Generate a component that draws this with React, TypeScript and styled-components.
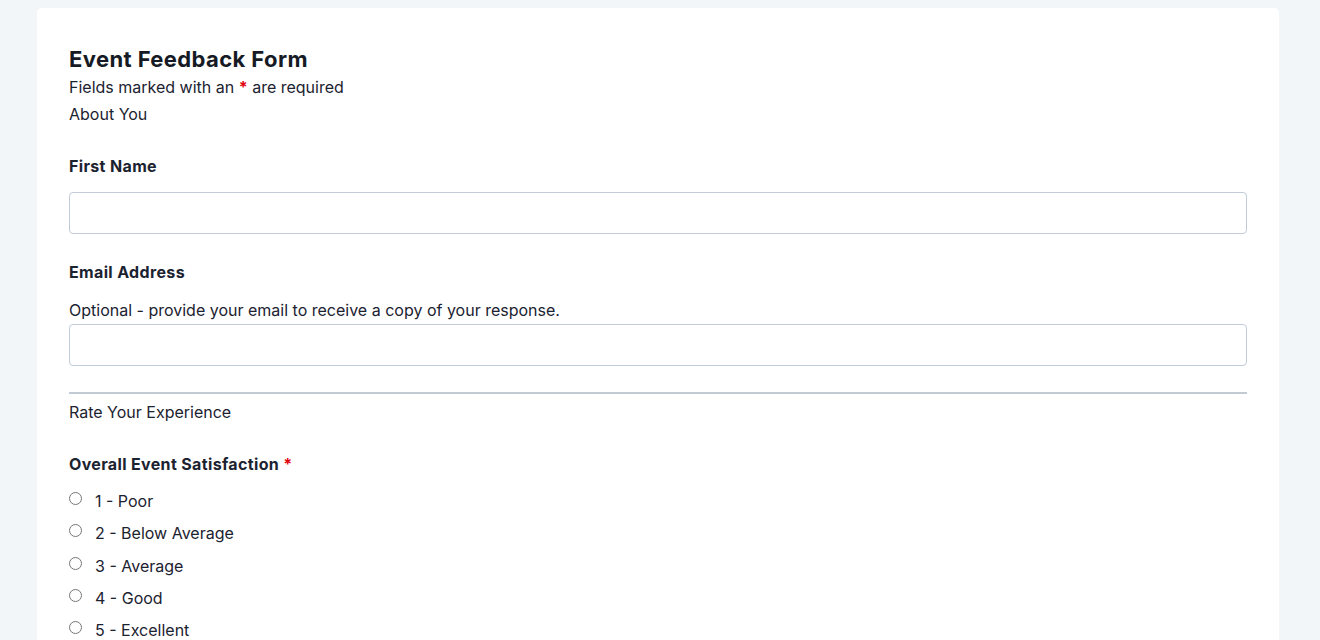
import React from "react";
import styled, { createGlobalStyle } from "styled-components";

const GlobalStyle = createGlobalStyle`
  html, body {
    margin: 0;
    padding: 0;
    background: #f3f6f9;
    font-family: Inter, "Noto Sans", sans-serif;
    color: #1b2230;
  }
`;

const Page = styled.div`
  padding: 8px 41px 0 37px;
`;

const Card = styled.form`
  background: #ffffff;
  border-radius: 5px;
  padding: 37px 32px 40px;
  box-sizing: border-box;
`;

const Title = styled.h1`
  margin: 0 0 1px;
  font-size: 22px;
  line-height: 28px;
  font-weight: 700;
  letter-spacing: 0.4px;
  color: #151a24;
`;

const Text = styled.p`
  margin: 0;
  font-size: 16px;
  line-height: 27px;
`;

const Req = styled.span`
  color: #e0000b;
  font-weight: 700;
`;

const Field = styled.div`
  margin-top: 26px;
  display: flex;
  flex-direction: column;
`;

const Label = styled.label`
  font-size: 16px;
  line-height: 24px;
  font-weight: 700;
  letter-spacing: 0.35px;
  color: #1b2230;
`;

const Hint = styled.div`
  margin-top: 14px;
  font-size: 16px;
  line-height: 24px;
`;

const Input = styled.input<{ $gap: number }>`
  margin-top: ${(p) => p.$gap}px;
  height: 42px;
  box-sizing: border-box;
  border: 1px solid #c2ccd8;
  border-radius: 4px;
  padding: 0 12px;
  font: inherit;
  font-size: 16px;
`;

const Divider = styled.hr`
  margin: 26px 0 5px;
  border: none;
  height: 2px;
  background: #c3cad4;
`;

const Options = styled.div`
  margin-top: 9px;
  display: flex;
  flex-direction: column;
`;

const Option = styled.label`
  display: flex;
  align-items: flex-start;
  height: 32.25px;
  padding-top: 4px;
  box-sizing: border-box;
  font-size: 16px;
  line-height: 24px;
`;

const Radio = styled.input`
  margin: 3px 13px 0 0;
  width: 13px;
  height: 13px;
`;

const ratings = ["1 - Poor", "2 - Below Average", "3 - Average", "4 - Good", "5 - Excellent"];

export default function App() {
  return (
    <>
      <GlobalStyle />
      <Page>
        <Card onSubmit={(e) => e.preventDefault()}>
          <Title>Event Feedback Form</Title>
          <Text>
            Fields marked with an <Req>*</Req> are required
          </Text>
          <Text>About You</Text>

          <Field>
            <Label htmlFor="first-name">First Name</Label>
            <Input id="first-name" type="text" $gap={14} />
          </Field>

          <Field>
            <Label htmlFor="email">Email Address</Label>
            <Hint>Optional - provide your email to receive a copy of your response.</Hint>
            <Input id="email" type="email" $gap={2} />
          </Field>

          <Divider />
          <Text>Rate Your Experience</Text>

          <Field>
            <Label>
              Overall Event Satisfaction <Req>*</Req>
            </Label>
            <Options>
              {ratings.map((r) => (
                <Option key={r}>
                  <Radio type="radio" name="satisfaction" value={r} />
                  {r}
                </Option>
              ))}
            </Options>
          </Field>
        </Card>
      </Page>
    </>
  );
}
